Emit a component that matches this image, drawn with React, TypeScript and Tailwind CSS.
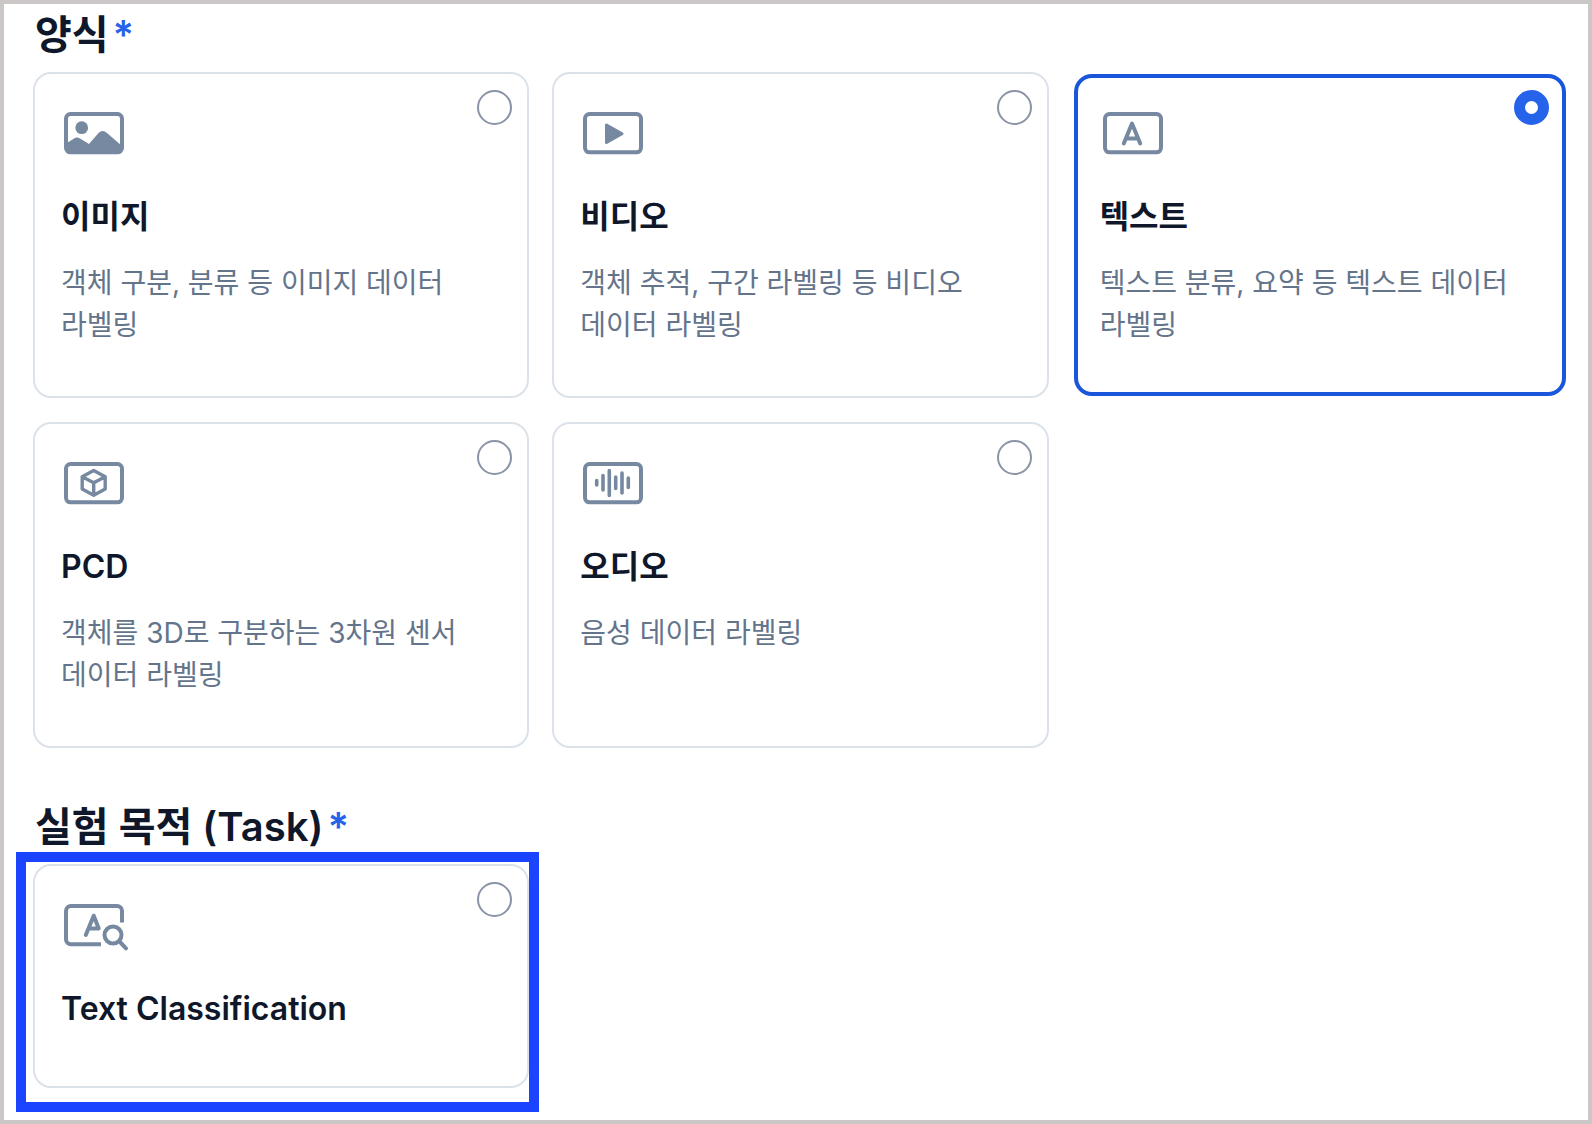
import { useState, type ReactNode } from 'react'
import clsx from 'clsx'

interface Option {
  id: string
  label: string
  description?: string
  icon: ReactNode
}

function IconFrame({ children, open = false }: { children: ReactNode; open?: boolean }) {
  return (
    <svg
      className="ml-px h-12 w-[68px] shrink-0 overflow-visible text-[#7788a1]"
      viewBox="0 0 68 48"
      fill="none"
      stroke="currentColor"
      strokeWidth="4"
      strokeLinecap="round"
      strokeLinejoin="round"
      aria-hidden="true"
    >
      {open ? (
        <path d="M60 20.5V9a5 5 0 0 0-5-5H9a5 5 0 0 0-5 5v28.3a5 5 0 0 0 5 5h30" strokeLinecap="butt" />
      ) : (
        <rect x="4" y="4" width="56" height="38.3" rx="4.5" />
      )}
      {children}
    </svg>
  )
}

const FORMATS: Option[] = [
  {
    id: 'image',
    label: '이미지',
    description: '객체 구분, 분류 등 이미지 데이터 라벨링',
    icon: (
      <IconFrame>
        <circle cx="19.7" cy="17.7" r="6.4" fill="currentColor" stroke="none" />
        <path
          d="M5 33L12 28.5Q15 26.5 18 28.5L27 34L36.5 23Q40.5 19 45 23L60 36V41H5z"
          fill="currentColor"
          stroke="none"
        />
      </IconFrame>
    ),
  },
  {
    id: 'video',
    label: '비디오',
    description: '객체 추적, 구간 라벨링 등 비디오 데이터 라벨링',
    icon: (
      <IconFrame>
        <path d="M25.5 15v17.5l15.5-8.8z" fill="currentColor" strokeWidth="3" />
      </IconFrame>
    ),
  },
  {
    id: 'text',
    label: '텍스트',
    description: '텍스트 분류, 요약 등 텍스트 데이터 라벨링',
    icon: (
      <IconFrame>
        <path d="M22.8 33.5l8.2-20 8.2 20M25.5 28.5h11" />
      </IconFrame>
    ),
  },
  {
    id: 'pcd',
    label: 'PCD',
    description: '객체를 3D로 구분하는 3차원 센서 데이터 라벨링',
    icon: (
      <IconFrame>
        <path
          d="M31.7 10.5l11.5 6.3v12.2l-11.5 6.3-11.5-6.3V16.8zM20.2 16.8l11.5 6 11.5-6M31.7 22.8v12.5"
          strokeWidth="3.4"
        />
      </IconFrame>
    ),
  },
  {
    id: 'audio',
    label: '오디오',
    description: '음성 데이터 라벨링',
    icon: (
      <IconFrame>
        <path
          d="M15.7 20.5v4.5M22 15.5v14.5M28.3 10.5v25M34.7 17v11.5M41 13v20M47.3 18v9.5"
          strokeWidth="3.6"
        />
      </IconFrame>
    ),
  },
]

const TASKS: Option[] = [
  {
    id: 'text-classification',
    label: 'Text Classification',
    icon: (
      <IconFrame open>
        <path d="M23.8 33l7.9-19.3 5 12.8h-9.5" />
        <circle cx="51" cy="33" r="8.5" />
        <path d="M57.5 39.5l6.5 6.8" />
      </IconFrame>
    ),
  },
]

function SectionTitle({ id, children }: { id: string; children: ReactNode }) {
  return (
    <h2 id={id} className="mb-1.5 flex gap-1 px-0.5 text-[40px] leading-[62px] font-semibold">
      {children}
      <span className="text-[#2563eb]">*</span>
    </h2>
  )
}

interface OptionCardProps {
  option: Option
  name: string
  checked: boolean
  onSelect: (id: string) => void
}

function OptionCard({ option, name, checked, onSelect }: OptionCardProps) {
  return (
    <label
      className={clsx(
        'flex cursor-pointer items-start justify-between rounded-[18px] bg-white',
        checked
          ? 'm-0.5 border-4 border-[#1a56db] pr-[13px] pl-[22px]'
          : 'border-2 border-[#dce2ea] pr-[15px] pl-[26px]',
        option.description
          ? checked ? 'min-h-[322px]' : 'min-h-[326px]'
          : checked ? 'min-h-[220px]' : 'min-h-[224px]'
      )}
    >
      <span className={clsx('flex min-w-0 flex-col', checked ? 'pt-8' : 'pt-9')}>
        {option.icon}
        <span className="mt-9 text-[32px] leading-[46px] font-semibold">{option.label}</span>
        {option.description && (
          <span className="mt-[22px] text-[28px] leading-[42px] break-keep text-[#64748b]">
            {option.description}
          </span>
        )}
      </span>
      <input
        type="radio"
        name={name}
        value={option.id}
        checked={checked}
        onChange={() => onSelect(option.id)}
        className={clsx(
          'size-[35px] shrink-0 cursor-pointer appearance-none rounded-full bg-white',
          checked ? 'mt-3 border-[11px] border-[#2563eb]' : 'mt-4 border-2 border-[#8a94a6]'
        )}
      />
    </label>
  )
}

export default function App() {
  const [format, setFormat] = useState('text')
  const [task, setTask] = useState('')

  return (
    <main
      lang="ko"
      className="min-h-screen border-4 border-[#cbc7c7] bg-white pr-5 pb-8 pl-[29px] font-['Inter','Noto_Sans_CJK_KR',sans-serif] text-[#0f172a]"
    >
      <section aria-labelledby="format-title">
        <SectionTitle id="format-title">양식</SectionTitle>
        <div className="grid grid-cols-3 gap-x-[23px] gap-y-6">
          {FORMATS.map((option) => (
            <OptionCard
              key={option.id}
              option={option}
              name="format"
              checked={format === option.id}
              onSelect={setFormat}
            />
          ))}
        </div>
      </section>

      <section aria-labelledby="task-title" className="mt-12">
        <SectionTitle id="task-title">실험 목적 (Task)</SectionTitle>
        <div className="grid grid-cols-3 gap-x-[23px] gap-y-6">
          {TASKS.map((option) => (
            <div key={option.id} className="relative">
              <OptionCard option={option} name="task" checked={task === option.id} onSelect={setTask} />
              {/* Highlight frame */}
              <div className="pointer-events-none absolute -top-3 -right-2.5 -bottom-6 -left-[17px] border-10 border-[#1a44ff]" />
            </div>
          ))}
        </div>
      </section>
    </main>
  )
}
